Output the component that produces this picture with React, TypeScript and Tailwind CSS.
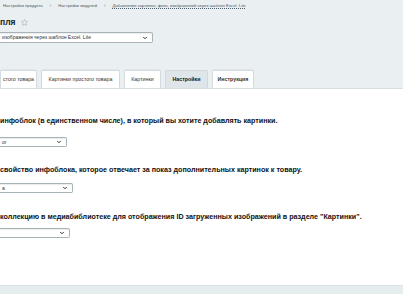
import { ChevronDown, Star } from "lucide-react"

const tabs = [
  { label: "стого товара", w: "w-[37px]" },
  { label: "Картинки простого товара", w: "w-[79px]" },
  { label: "Картинки", w: "w-[37px]" },
  { label: "Настройки", w: "w-[43px]", active: true },
  { label: "Инструкция", w: "w-[42px]" },
]

function Select({ value, className }: { value: string; className: string }) {
  return (
    <div
      className={`flex items-center justify-between rounded-r-[2px] border border-l-0 border-[#a8b3b8] bg-white pl-[2px] pr-[4px] shadow-[inset_0_1px_1px_rgba(0,0,0,0.08)] ${className}`}
    >
      <span className="text-[5px] leading-none text-[#333]">{value}</span>
      <ChevronDown className="h-[6px] w-[6px] text-[#333]" strokeWidth={4} />
    </div>
  )
}

function Label({ children }: { children: string }) {
  return <div className="text-[7.15px] font-bold leading-[10px] text-[#111]">{children}</div>
}

export default function App() {
  return (
    <div className="flex h-[294px] w-[403px] flex-col overflow-hidden bg-[#eaeff1] font-['Liberation_Sans',Arial,sans-serif]">
      <div className="flex h-[13px] items-center gap-[7px] pl-[3px] text-[4.25px] text-[#4a5a66]">
        <span>Настройки продукта</span>
        <span>›</span>
        <span>Настройки модулей</span>
        <span>›</span>
        <span className="underline decoration-dotted">
          Добавление картинок, фото, изображений через шаблон Excel. Lite
        </span>
      </div>
      <div className="mt-[3px] flex h-[12px] items-center gap-[5px]">
        <span className="text-[8.5px] font-bold leading-none text-[#222]">пля</span>
        <Star className="h-[7px] w-[7px] text-[#8a959b]" strokeWidth={1.5} />
      </div>
      <Select
        value="изображения через шаблон Excel. Lite"
        className="mt-[4px] h-[11px] w-[153px]"
      />
      <div className="mt-[27px] flex h-[18px] items-stretch gap-[4px]">
        {tabs.map((t) => (
          <div
            key={t.label}
            className={`flex items-center justify-center rounded-t-[2px] border border-b-0 text-[5.3px] leading-none ${t.w} ${
              t.active
                ? "border-[#cfd8dc] bg-[#dfe6e9] font-bold text-[#111]"
                : "border-[#d3dbdf] bg-white text-[#333] shadow-[0_-1px_1px_rgba(0,0,0,0.04)]"
            } ${t.label === "Инструкция" ? "font-bold" : ""}`}
          >
            {t.label}
          </div>
        ))}
      </div>
      <div className="flex h-[197px] flex-col border-t border-[#d6dee1] bg-white pt-[27px]">
        <Label>инфоблок (в единственном числе), в который вы хотите добавлять картинки.</Label>
        <Select value="ог" className="mt-[11px] h-[10px] w-[67px]" />
        <div className="mt-[18px]">
          <Label>свойство инфоблока, которое отвечает за показ дополнительных картинок к товару.</Label>
        </div>
        <Select value="а" className="mt-[8px] h-[10px] w-[73px]" />
        <div className="mt-[19px]">
          <Label>
            коллекцию в медиабиблиотеке для отображения ID загруженных изображений в разделе "Картинки".
          </Label>
        </div>
        <Select value="" className="mt-[6px] h-[10px] w-[70px]" />
      </div>
      <div className="flex-1 border-t border-[#d9e2e5] bg-[#e6edef]" />
    </div>
  )
}
